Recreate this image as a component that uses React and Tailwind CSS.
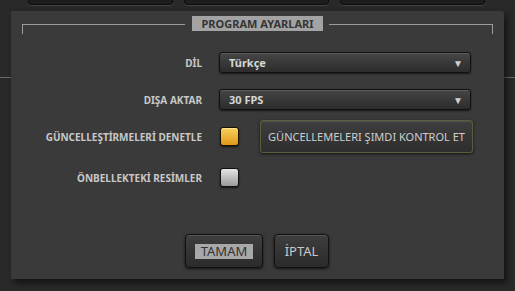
export default function App() {
  const font = { fontFamily: '"Noto Sans", "Open Sans", Arial, sans-serif' };
  const Select = ({ value }) => (
    <div className="flex h-[21px] w-[252px] items-center justify-between rounded-[3px] border border-[#111] bg-gradient-to-b from-[#464646] to-[#2c2c2c] pl-[9px] pr-[7px] shadow-[0_1px_2px_rgba(0,0,0,0.6),inset_0_1px_0_rgba(255,255,255,0.12)]">
      <span className="text-[11px] font-bold leading-none text-[#d6d6d6]">{value}</span>
      <span className="text-[10px] leading-none text-[#cfcfcf]">▼</span>
    </div>
  );
  const Label = ({ children }) => (
    <div className="w-[180px] shrink-0 whitespace-nowrap text-right text-[10px] font-bold leading-none text-[#c8c8c8]">{children}</div>
  );
  return (
    <div style={font} className="relative h-[291px] w-[515px] overflow-hidden bg-[#292929]">
      <div className="absolute left-0 right-0 top-[77px] h-px bg-[#6a6a6a]" />
      <div className="flex h-[5px] gap-[11px] pl-[28px]">
        <div className="h-[5px] w-[145px] rounded-b-[4px] border border-t-0 border-[#0c0c0c] bg-[#1d1d1d] shadow-[0_1px_0_#444]" />
        <div className="h-[5px] w-[145px] rounded-b-[4px] border border-t-0 border-[#0c0c0c] bg-[#1d1d1d] shadow-[0_1px_0_#444]" />
        <div className="h-[5px] w-[145px] rounded-b-[4px] border border-t-0 border-[#0c0c0c] bg-[#1d1d1d] shadow-[0_1px_0_#444]" />
      </div>
      <div className="relative ml-[11px] mt-[6px] h-[268px] w-[493px] rounded-tr-[2px] bg-[#3a3a3a] px-[11px] pt-[5px] shadow-[3px_4px_6px_rgba(0,0,0,0.55)]">
        <div className="flex h-[15px] items-start">
          <div className="mt-[8px] h-[10px] w-[163px] border-l border-t border-[#9c9c9c]" />
          <div className="ml-[7px] flex h-[15px] w-[131px] items-center justify-center bg-[#a3a3a3] text-[11px] font-bold leading-none text-[#353535]">PROGRAM AYARLARI</div>
          <div className="ml-[6px] mt-[8px] h-[10px] w-[164px] border-r border-t border-[#9c9c9c]" />
        </div>
        <div className="mt-[21px] flex items-center gap-[17px]">
          <Label>DİL</Label>
          <Select value="Türkçe" />
        </div>
        <div className="mt-[16px] flex items-center gap-[17px]">
          <Label>DIŞA AKTAR</Label>
          <Select value="30 FPS" />
        </div>
        <div className="mt-[10px] flex items-center">
          <Label>GÜNCELLEŞTİRMELERİ DENETLE</Label>
          <div className="ml-[18px] h-[19px] w-[19px] rounded-[3px] border border-[#1a1200] bg-gradient-to-b from-[#f9cf5a] to-[#e0980f] shadow-[0_1px_2px_rgba(0,0,0,0.7),inset_0_1px_0_rgba(255,240,180,0.6)]" />
          <div className="ml-[21px] flex h-[33px] w-[213px] items-center justify-center rounded-[3px] border border-[#5c5c3e] bg-gradient-to-b from-[#3e3e3e] to-[#2e2e2e] text-[11px] leading-none text-[#cfcfcf] shadow-[0_1px_3px_rgba(0,0,0,0.7),inset_0_1px_0_rgba(255,255,255,0.1)]">
            GÜNCELLEMELERI ŞIMDI KONTROL ET
          </div>
        </div>
        <div className="mt-[15px] flex items-center">
          <Label>ÖNBELLEKTEKİ RESİMLER</Label>
          <div className="ml-[18px] h-[19px] w-[19px] rounded-[3px] border border-[#111] bg-gradient-to-b from-[#e4e4e4] to-[#9a9a9a] shadow-[0_1px_2px_rgba(0,0,0,0.7)]" />
        </div>
        <div className="mt-[47px] flex gap-[11px] pl-[163px]">
          <div className="flex h-[34px] w-[78px] items-center justify-center rounded-[4px] border border-[#111] bg-gradient-to-b from-[#3e3e3e] to-[#2b2b2b] shadow-[0_1px_3px_rgba(0,0,0,0.7),inset_0_1px_0_rgba(255,255,255,0.12)]">
            <span className="flex h-[15px] w-[58px] items-center justify-center bg-[#a8a8a8] text-[13px] leading-none text-[#333]">TAMAM</span>
          </div>
          <div className="flex h-[34px] w-[55px] items-center justify-center rounded-[4px] border border-[#111] bg-gradient-to-b from-[#3e3e3e] to-[#2b2b2b] text-[13px] leading-none text-[#c8c8c8] shadow-[0_1px_3px_rgba(0,0,0,0.7),inset_0_1px_0_rgba(255,255,255,0.12)]">
            İPTAL
          </div>
        </div>
      </div>
    </div>
  );
}
